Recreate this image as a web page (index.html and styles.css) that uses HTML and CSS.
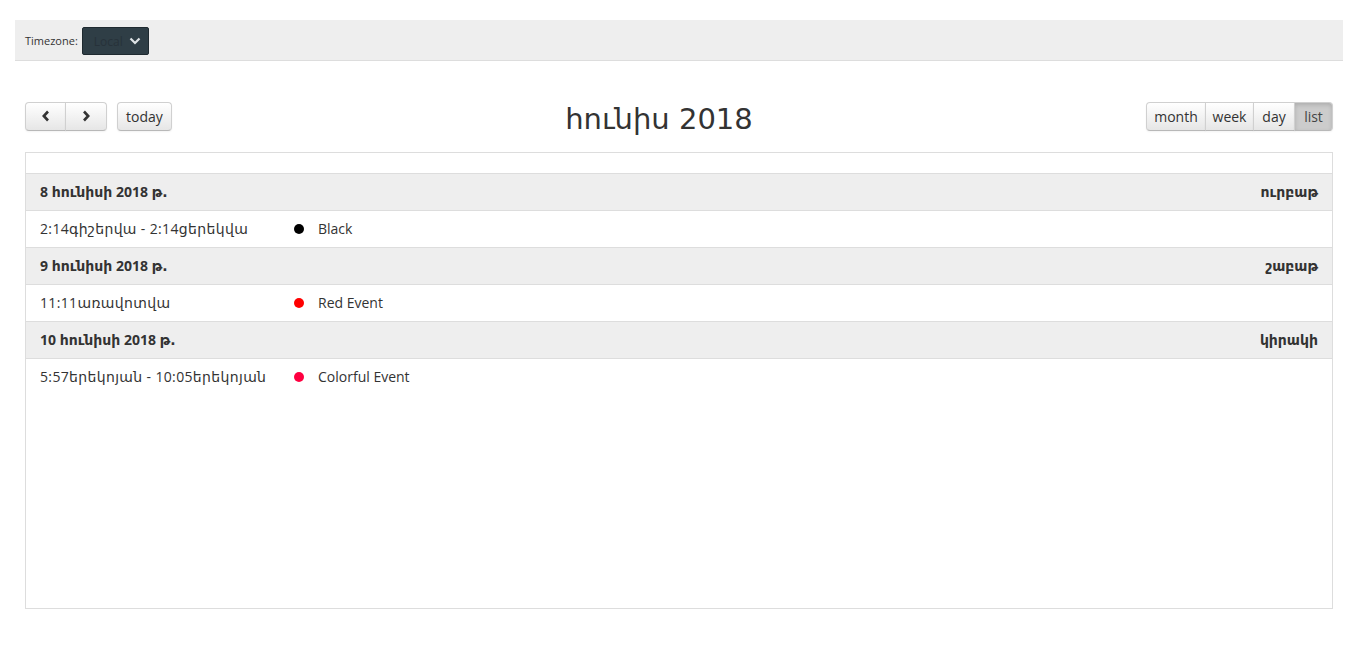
FILE: index.html
```html
<!DOCTYPE html>
<html lang="hy">
<head>
<meta charset="utf-8">
<title>Calendar</title>
<link rel="stylesheet" href="styles.css">
</head>
<body>
<div class="topbar">
  <span class="tz-label">Timezone:</span>
  <div class="tz-select"><span class="tz-value">Local</span>
    <svg class="tz-caret" width="12" height="8" viewBox="0 0 12 8"><path d="M1.5 1.5 L6 6 L10.5 1.5" fill="none" stroke="#dfe3e6" stroke-width="2.2"/></svg>
  </div>
</div>
<div class="calendar">
  <div class="toolbar">
    <div class="tb-left">
      <div class="btn-group">
        <button class="btn btn-first" aria-label="prev"><svg width="10" height="12" viewBox="0 0 10 12"><path d="M7 1.5 L2.8 6 L7 10.5" fill="none" stroke="#333" stroke-width="2.6"/></svg></button>
        <button class="btn btn-last" aria-label="next"><svg width="10" height="12" viewBox="0 0 10 12"><path d="M3 1.5 L7.2 6 L3 10.5" fill="none" stroke="#333" stroke-width="2.6"/></svg></button>
      </div>
      <button class="btn btn-solo">today</button>
    </div>
    <h2 class="title">հունիս 2018</h2>
    <div class="tb-right">
      <div class="btn-group">
        <button class="btn btn-first">month</button>
        <button class="btn">week</button>
        <button class="btn">day</button>
        <button class="btn btn-last btn-active">list</button>
      </div>
    </div>
  </div>
  <div class="list">
    <table class="list-table">
      <tr class="day-row"><td colspan="2" class="day-main">8 <span class="hy">հունիսի</span> 2018 <span class="hy">թ.</span></td><td class="day-alt"><span class="hy">ուրբաթ</span></td></tr>
      <tr class="ev-row"><td class="ev-time">2:14<span class="hy">գիշերվա</span> - 2:14<span class="hy">ցերեկվա</span></td><td class="ev-dot"><span class="dot dot-black"></span></td><td class="ev-title">Black</td></tr>
      <tr class="day-row"><td colspan="2" class="day-main">9 <span class="hy">հունիսի</span> 2018 <span class="hy">թ.</span></td><td class="day-alt"><span class="hy">շաբաթ</span></td></tr>
      <tr class="ev-row"><td class="ev-time">11:11<span class="hy">առավոտվա</span></td><td class="ev-dot"><span class="dot dot-red"></span></td><td class="ev-title">Red Event</td></tr>
      <tr class="day-row"><td colspan="2" class="day-main">10 <span class="hy">հունիսի</span> 2018 <span class="hy">թ.</span></td><td class="day-alt"><span class="hy">կիրակի</span></td></tr>
      <tr class="ev-row ev-last"><td class="ev-time">5:57<span class="hy">երեկոյան</span> - 10:05<span class="hy">երեկոյան</span></td><td class="ev-dot"><span class="dot dot-color"></span></td><td class="ev-title">Colorful Event</td></tr>
    </table>
  </div>
</div>
</body>
</html>
```
FILE: styles.css
```css
html, body {
  margin: 0;
  padding: 0;
  background: #fff;
}
body {
  padding: 20px 15px 0;
  font-family: "Open Sans", "DejaVu Sans", sans-serif;
  color: #333;
  font-size: 14px;
}
.hy {
  font-family: "DejaVu Sans", sans-serif;
}
.topbar {
  height: 40px;
  background: #eeeeee;
  border-bottom: 1px solid #dddddd;
  display: flex;
  align-items: center;
  padding-left: 10px;
}
.tz-label {
  font-size: 11px;
  color: #333;
  margin-right: 4px;
}
.tz-select {
  width: 67px;
  height: 28px;
  box-sizing: border-box;
  background: #2f3e46;
  border: 1px solid #1f2a30;
  border-radius: 2px;
  display: flex;
  align-items: center;
  padding-left: 11px;
  position: relative;
  top: 1px;
}
.tz-value {
  font-size: 12px;
  color: #27323a;
}
.tz-caret {
  margin-left: 6px;
}
.calendar {
  margin: 40px 10px 0;
}
.toolbar {
  display: flex;
  align-items: center;
  height: 30px;
  margin-bottom: 21px;
}
.tb-left {
  display: flex;
  gap: 10px;
}
.tb-right {
  display: flex;
  justify-content: flex-end;
}
.title {
  flex: 1;
  text-align: center;
  margin: 0;
  font-family: "DejaVu Sans", sans-serif;
  font-weight: normal;
  font-size: 29px;
  line-height: 30px;
  position: relative;
  top: 3px;
}
.btn-group {
  display: flex;
}
.btn {
  height: 29px;
  box-sizing: border-box;
  padding: 0 9px;
  font-family: "Open Sans", "DejaVu Sans", sans-serif;
  font-size: 14px;
  color: #333;
  background: linear-gradient(#ffffff, #e6e6e6);
  border: 1px solid #d0d0d0;
  border-bottom-color: #b8b8b8;
  border-radius: 0;
  margin: 0 0 0 -1px;
  display: flex;
  align-items: center;
  justify-content: center;
  box-shadow: inset 0 1px 0 rgba(255,255,255,.2), 0 1px 2px rgba(0,0,0,.05);
}
.btn-first {
  margin-left: 0;
  border-radius: 4px 0 0 4px;
}
.btn-last {
  border-radius: 0 4px 4px 0;
}
.btn-solo {
  border-radius: 4px;
  margin-left: 0;
  width: 55px;
}
.tb-left .btn-group .btn {
  width: 42px;
}
.tb-left .btn-group .btn-first {
  width: 41px;
}
.tb-right .btn:nth-child(1) { width: 60px; }
.tb-right .btn:nth-child(2) { width: 49px; }
.tb-right .btn:nth-child(3) { width: 42px; }
.tb-right .btn:nth-child(4) { width: 39px; }
.btn-active {
  background: #cccccc;
  box-shadow: inset 0 2px 4px rgba(0,0,0,.15), 0 1px 2px rgba(0,0,0,.05);
  color: #444;
}
.list {
  border: 1px solid #dddddd;
  height: 457px;
  box-sizing: border-box;
  padding-top: 20px;
}
.list-table {
  width: 100%;
  border-collapse: collapse;
}
.list-table td {
  padding: 0 14px 1px;
  height: 35px;
  border-top: 1px solid #dddddd;
  border-bottom: 1px solid #dddddd;
  white-space: nowrap;
}
.day-row td {
  background: #eeeeee;
  font-weight: bold;
  font-size: 14px;
}
.day-main {
  text-align: left;
}
.day-alt {
  text-align: right;
}
.ev-row td {
  font-size: 14px;
}
.ev-last td {
  border-bottom: none;
}
.list-table td.ev-time {
  width: 240px;
  letter-spacing: 0.35px;
}
.list-table td.ev-dot {
  width: 10px;
  padding: 0 0 1px;
}
.ev-title {
  padding-left: 14px;
}
.dot {
  display: inline-block;
  width: 10px;
  height: 10px;
  border-radius: 50%;
  vertical-align: middle;
  position: relative;
  top: -1px;
}
.dot-black { background: #000000; }
.dot-red { background: #ff0000; }
.dot-color { background: #ff0040; }
```
